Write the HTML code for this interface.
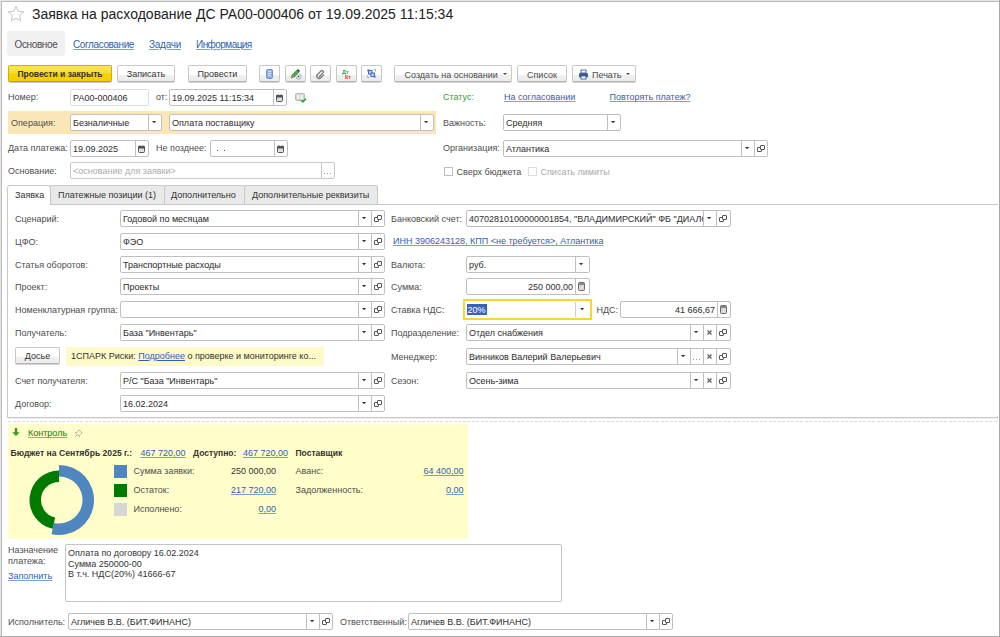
<!DOCTYPE html>
<html><head><meta charset="utf-8"><style>
html,body{margin:0;padding:0;width:1000px;height:637px;overflow:hidden;background:#fff;font-family:"Liberation Sans", sans-serif;}
.t{position:absolute;white-space:nowrap;line-height:12px;font-size:9px;-webkit-text-stroke:0px currentColor}
.ft{position:absolute;top:0.5px;white-space:nowrap;overflow:hidden;font-size:9px;-webkit-text-stroke:0.05px currentColor}
body{position:relative}
</style></head><body>
<div style="position:absolute;left:0px;top:0px;width:1000px;height:1px;box-sizing:border-box;background:#e4e4e6"></div>
<div style="position:absolute;left:0px;top:0px;width:1px;height:637px;box-sizing:border-box;background:#e4e4e6"></div>
<div style="position:absolute;left:1px;top:1px;width:999px;height:1px;box-sizing:border-box;background:#bcbcbc"></div>
<div style="position:absolute;left:1px;top:1px;width:1px;height:636px;box-sizing:border-box;background:#bcbcbc"></div>
<div style="position:absolute;left:999px;top:0px;width:1px;height:637px;box-sizing:border-box;background:#a9a9a9"></div>
<div style="position:absolute;left:0px;top:636px;width:1000px;height:1px;box-sizing:border-box;background:#a9a9a9"></div>
<svg width="18" height="18" style="position:absolute;left:7px;top:5px" viewBox="0 0 18 18"><path d="M9 1.2l2.3 5.1 5.5.5-4.2 3.7 1.3 5.4L9 13.1l-4.9 2.8 1.3-5.4L1.2 6.8l5.5-.5z" fill="none" stroke="#c4c4c4" stroke-width="1"/></svg>
<div class="t" style="left:32px;top:8.15px;font-size:14px;color:#222;font-weight:normal;">Заявка на расходование ДС РА00-000406 от 19.09.2025 11:15:34</div>
<div style="position:absolute;left:7px;top:31px;width:58px;height:25px;box-sizing:border-box;background:#f0f0f0;border-radius:4px"></div>
<div class="t" style="left:14.5px;top:38.53px;font-size:10px;color:#4d4d4d;font-weight:normal;letter-spacing:-0.37px;">Основное</div>
<div class="t" style="left:73px;top:38.53px;font-size:10px;color:#2f5fb3;font-weight:normal;text-decoration:underline;text-decoration-color:#2f5fb399;text-underline-offset:1px;letter-spacing:-0.39px;">Согласование</div>
<div class="t" style="left:149px;top:38.53px;font-size:10px;color:#2f5fb3;font-weight:normal;text-decoration:underline;text-decoration-color:#2f5fb399;text-underline-offset:1px;letter-spacing:-0.27px;">Задачи</div>
<div class="t" style="left:196px;top:38.53px;font-size:10px;color:#2f5fb3;font-weight:normal;text-decoration:underline;text-decoration-color:#2f5fb399;text-underline-offset:1px;letter-spacing:-0.55px;">Информация</div>
<div style="position:absolute;left:8px;top:65px;width:104px;height:17px;box-sizing:border-box;border:1px solid #d2b000;border-bottom-color:#c09f00;background:linear-gradient(#fbe651 0,#f8dd2c 48%,#f4d200 52%,#f3d000 100%);box-shadow:0 1px 0 rgba(0,0,0,0.2);border-radius:2px;"><div style="position:absolute;left:0;right:0;top:1px;line-height:15px;text-align:center;font-size:8.5px;font-weight:bold;color:#333;white-space:nowrap">Провести и закрыть</div></div>
<div style="position:absolute;left:117px;top:65px;width:58px;height:17px;box-sizing:border-box;border:1px solid #c8c8c8;border-bottom-color:#b2b2b2;background:linear-gradient(#fff 0,#fff 60%,#f0f0f0 60%,#ececec 100%);box-shadow:0 1px 0 rgba(0,0,0,0.16);border-radius:2px;"><div style="position:absolute;left:0;right:0;top:1px;line-height:15px;text-align:center;font-size:9px;font-weight:normal;color:#333;white-space:nowrap">Записать</div></div>
<div style="position:absolute;left:188px;top:65px;width:59px;height:17px;box-sizing:border-box;border:1px solid #c8c8c8;border-bottom-color:#b2b2b2;background:linear-gradient(#fff 0,#fff 60%,#f0f0f0 60%,#ececec 100%);box-shadow:0 1px 0 rgba(0,0,0,0.16);border-radius:2px;"><div style="position:absolute;left:0;right:0;top:1px;line-height:15px;text-align:center;font-size:9px;font-weight:normal;color:#333;white-space:nowrap">Провести</div></div>
<div style="position:absolute;left:259px;top:65px;width:21px;height:17px;box-sizing:border-box;border:1px solid #c8c8c8;border-bottom-color:#b2b2b2;background:linear-gradient(#fff 0,#fff 60%,#f0f0f0 60%,#ececec 100%);box-shadow:0 1px 0 rgba(0,0,0,0.16);border-radius:2px;"><div style="position:absolute;left:0;right:0;top:1px;line-height:15px;text-align:center;font-size:9px;font-weight:normal;color:#333;white-space:nowrap"></div><svg width="19" height="15" style="position:absolute;left:0;top:0"><rect x="6.5" y="3.5" width="6" height="9" rx="1.2" fill="#8fb1e0" stroke="#6f95cc"/><path d="M8 5.5h3M8 7.5h3M8 9.5h3" stroke="#d6e4f7"/></svg></div>
<div style="position:absolute;left:285px;top:65px;width:21px;height:17px;box-sizing:border-box;border:1px solid #c8c8c8;border-bottom-color:#b2b2b2;background:linear-gradient(#fff 0,#fff 60%,#f0f0f0 60%,#ececec 100%);box-shadow:0 1px 0 rgba(0,0,0,0.16);border-radius:2px;"><div style="position:absolute;left:0;right:0;top:1px;line-height:15px;text-align:center;font-size:9px;font-weight:normal;color:#333;white-space:nowrap"></div><svg width="19" height="15" style="position:absolute;left:0;top:0"><path d="M5 12l1-3 5-5 2 2-5 5z" fill="#3fae49" stroke="#2c7a33" stroke-width="0.6"/><path d="M5 12l1-3 2 2z" fill="#c88a4a"/><path d="M11 4l1-1 2 2-1 1z" fill="#333"/><circle cx="12.5" cy="10.5" r="2.6" fill="#fff" stroke="#7d8fb8" stroke-width="0.8"/><circle cx="12.5" cy="10.5" r="0.9" fill="#333"/></svg></div>
<div style="position:absolute;left:310px;top:65px;width:21px;height:17px;box-sizing:border-box;border:1px solid #c8c8c8;border-bottom-color:#b2b2b2;background:linear-gradient(#fff 0,#fff 60%,#f0f0f0 60%,#ececec 100%);box-shadow:0 1px 0 rgba(0,0,0,0.16);border-radius:2px;"><div style="position:absolute;left:0;right:0;top:1px;line-height:15px;text-align:center;font-size:9px;font-weight:normal;color:#333;white-space:nowrap"></div><svg width="19" height="15" style="position:absolute;left:0;top:0" fill="none" stroke="#7a7a7a" stroke-width="1.3"><path d="M8 11l4-4a1.4 1.4 0 0 0-2-2L6.5 8.5a2.3 2.3 0 0 0 3.3 3.3l3.2-3.2"/></svg></div>
<div style="position:absolute;left:336px;top:65px;width:21px;height:17px;box-sizing:border-box;border:1px solid #c8c8c8;border-bottom-color:#b2b2b2;background:linear-gradient(#fff 0,#fff 60%,#f0f0f0 60%,#ececec 100%);box-shadow:0 1px 0 rgba(0,0,0,0.16);border-radius:2px;"><div style="position:absolute;left:0;right:0;top:1px;line-height:15px;text-align:center;font-size:9px;font-weight:normal;color:#333;white-space:nowrap"></div><svg width="19" height="15" style="position:absolute;left:0;top:0"><text x="5" y="8" font-family="Liberation Sans" font-weight="bold" font-size="5.5" fill="#2f9e45">Дт</text><text x="8" y="13" font-family="Liberation Sans" font-weight="bold" font-size="5.5" fill="#e83a28">Кт</text></svg></div>
<div style="position:absolute;left:361px;top:65px;width:21px;height:17px;box-sizing:border-box;border:1px solid #c8c8c8;border-bottom-color:#b2b2b2;background:linear-gradient(#fff 0,#fff 60%,#f0f0f0 60%,#ececec 100%);box-shadow:0 1px 0 rgba(0,0,0,0.16);border-radius:2px;"><div style="position:absolute;left:0;right:0;top:1px;line-height:15px;text-align:center;font-size:9px;font-weight:normal;color:#333;white-space:nowrap"></div><svg width="19" height="15" style="position:absolute;left:0;top:0"><path d="M5.5 5.5v-2h2M11.5 3.5h2v2M13.5 9.5v2h-2M7.5 11.5h-2v-2" fill="none" stroke="#8fb0e0"/><rect x="6.5" y="4.5" width="3.5" height="3.5" fill="#b9d0f0" stroke="#3f6fb8"/><rect x="9" y="7" width="3.5" height="3.5" fill="#b9d0f0" stroke="#3f6fb8"/></svg></div>
<div style="position:absolute;left:394px;top:65px;width:118px;height:17px;box-sizing:border-box;border:1px solid #c8c8c8;border-bottom-color:#b2b2b2;background:linear-gradient(#fff 0,#fff 60%,#f0f0f0 60%,#ececec 100%);box-shadow:0 1px 0 rgba(0,0,0,0.16);border-radius:2px;"><div style="position:absolute;left:0;right:0;top:1px;line-height:15px;text-align:center;font-size:9px;font-weight:normal;color:#333;white-space:nowrap"></div><div class="t" style="left:9.5px;top:2.5px;color:#4d4d4d">Создать на основании</div><svg width="6" height="4" style="position:absolute;left:108px;top:7px"><path d="M0 0h4l-2 2z" fill="#444"/></svg></div>
<div style="position:absolute;left:517px;top:65px;width:50px;height:17px;box-sizing:border-box;border:1px solid #c8c8c8;border-bottom-color:#b2b2b2;background:linear-gradient(#fff 0,#fff 60%,#f0f0f0 60%,#ececec 100%);box-shadow:0 1px 0 rgba(0,0,0,0.16);border-radius:2px;"><div style="position:absolute;left:0;right:0;top:1px;line-height:15px;text-align:center;font-size:9px;font-weight:normal;color:#333;white-space:nowrap"></div><div class="t" style="left:9px;top:2.5px;color:#4d4d4d">Список</div></div>
<div style="position:absolute;left:572px;top:65px;width:64px;height:17px;box-sizing:border-box;border:1px solid #c8c8c8;border-bottom-color:#b2b2b2;background:linear-gradient(#fff 0,#fff 60%,#f0f0f0 60%,#ececec 100%);box-shadow:0 1px 0 rgba(0,0,0,0.16);border-radius:2px;"><div style="position:absolute;left:0;right:0;top:1px;line-height:15px;text-align:center;font-size:9px;font-weight:normal;color:#333;white-space:nowrap"></div><svg width="12" height="12" style="position:absolute;left:5px;top:3px"><rect x="3" y="1" width="5" height="3" fill="#fff" stroke="#3d5f94" stroke-width="0.9"/><rect x="1" y="4" width="9" height="4.5" rx="1.2" fill="#3d5f94"/><rect x="3" y="7" width="5" height="3" fill="#fff" stroke="#3d5f94" stroke-width="0.9"/></svg><div class="t" style="left:19px;top:2.5px;color:#4d4d4d">Печать</div><svg width="6" height="4" style="position:absolute;left:53px;top:7px"><path d="M0 0h4l-2 2z" fill="#444"/></svg></div>
<div class="t" style="left:8px;top:91.38px;font-size:9px;color:#4d4d4d;font-weight:normal;">Номер:</div>
<div style="position:absolute;left:70px;top:89px;width:79px;height:17px;box-sizing:border-box;border:1px solid #dcdcdc;border-radius:2px;background:#fff;"><div class="ft" style="left:2px;width:75px;height:15px;line-height:15px;color:#333333">РА00-000406</div></div>
<div class="t" style="left:156px;top:91.38px;font-size:9px;color:#4d4d4d;font-weight:normal;">от:</div>
<div style="position:absolute;left:169px;top:89px;width:118px;height:17px;box-sizing:border-box;border:1px solid #c0c0c0;border-radius:2px;background:#fff;"><div style="position:absolute;right:0px;top:0;width:13px;height:15px;box-sizing:border-box;border-left:1px solid #c0c0c0;"><svg width="12" height="15" style="position:absolute;left:0;top:0"><rect x="2.5" y="5.5" width="6" height="6" rx="1" fill="#dedede" stroke="#555"/><rect x="2" y="5" width="7" height="2.5" rx="1" fill="#505050"/><rect x="3.5" y="4" width="1" height="1" fill="#888"/><rect x="6.5" y="4" width="1" height="1" fill="#888"/></svg></div><div class="ft" style="left:2px;width:101px;height:15px;line-height:15px;color:#333333">19.09.2025 11:15:34</div></div>
<svg width="12" height="11" style="position:absolute;left:295px;top:93px"><rect x="0.5" y="0.5" width="9" height="7" rx="1" fill="#d4d4d4" stroke="#b8b8b8"/><rect x="2" y="2" width="2" height="4" fill="#f4f4f4"/><rect x="5.5" y="2" width="2" height="4" fill="#f4f4f4"/><path d="M6.3 7.3l1.6 1.6 3-3.2" fill="none" stroke="#22aa22" stroke-width="1.6"/></svg>
<div class="t" style="left:443px;top:91.38px;font-size:9px;color:#2f9f2f;font-weight:normal;">Статус:</div>
<div class="t" style="left:504px;top:91.38px;font-size:9px;color:#2f5fb3;font-weight:normal;text-decoration:underline;text-decoration-color:#2f5fb399;text-underline-offset:1px;">На согласовании</div>
<div class="t" style="left:609.5px;top:91.38px;font-size:9px;color:#2f5fb3;font-weight:normal;text-decoration:underline;text-decoration-color:#2f5fb399;text-underline-offset:1px;">Повторять платеж?</div>
<div style="position:absolute;left:8px;top:111px;width:428px;height:23px;box-sizing:border-box;background:#fbe7b6"></div>
<div class="t" style="left:11px;top:116.88px;font-size:9px;color:#4d4d4d;font-weight:normal;">Операция:</div>
<div style="position:absolute;left:70px;top:114px;width:92px;height:17px;box-sizing:border-box;border:1px solid #c0c0c0;border-radius:2px;background:#fff;"><div style="position:absolute;right:0px;top:0;width:13px;height:15px;box-sizing:border-box;border-left:1px solid #c0c0c0;"><svg width="12" height="15" style="position:absolute;left:0;top:0"><path d="M3 6h4.2l-2.1 2.2z" fill="#333"/></svg></div><div class="ft" style="left:2px;width:75px;height:15px;line-height:15px;color:#333333">Безналичные</div></div>
<div style="position:absolute;left:169px;top:114px;width:265px;height:17px;box-sizing:border-box;border:1px solid #c0c0c0;border-radius:2px;background:#fff;"><div style="position:absolute;right:0px;top:0;width:13px;height:15px;box-sizing:border-box;border-left:1px solid #c0c0c0;"><svg width="12" height="15" style="position:absolute;left:0;top:0"><path d="M3 6h4.2l-2.1 2.2z" fill="#333"/></svg></div><div class="ft" style="left:2px;width:248px;height:15px;line-height:15px;color:#333333">Оплата поставщику</div></div>
<div class="t" style="left:443px;top:116.88px;font-size:9px;color:#4d4d4d;font-weight:normal;">Важность:</div>
<div style="position:absolute;left:503px;top:114px;width:118px;height:17px;box-sizing:border-box;border:1px solid #c0c0c0;border-radius:2px;background:#fff;"><div style="position:absolute;right:0px;top:0;width:13px;height:15px;box-sizing:border-box;border-left:1px solid #c0c0c0;"><svg width="12" height="15" style="position:absolute;left:0;top:0"><path d="M3 6h4.2l-2.1 2.2z" fill="#333"/></svg></div><div class="ft" style="left:2px;width:101px;height:15px;line-height:15px;color:#333333">Средняя</div></div>
<div class="t" style="left:8px;top:142.38px;font-size:9px;color:#4d4d4d;font-weight:normal;">Дата платежа:</div>
<div style="position:absolute;left:70px;top:140px;width:79px;height:17px;box-sizing:border-box;border:1px solid #c0c0c0;border-radius:2px;background:#fff;"><div style="position:absolute;right:0px;top:0;width:13px;height:15px;box-sizing:border-box;border-left:1px solid #c0c0c0;"><svg width="12" height="15" style="position:absolute;left:0;top:0"><rect x="2.5" y="5.5" width="6" height="6" rx="1" fill="#dedede" stroke="#555"/><rect x="2" y="5" width="7" height="2.5" rx="1" fill="#505050"/><rect x="3.5" y="4" width="1" height="1" fill="#888"/><rect x="6.5" y="4" width="1" height="1" fill="#888"/></svg></div><div class="ft" style="left:2px;width:62px;height:15px;line-height:15px;color:#333333">19.09.2025</div></div>
<div class="t" style="left:156px;top:142.38px;font-size:9px;color:#4d4d4d;font-weight:normal;">Не позднее:</div>
<div style="position:absolute;left:210px;top:140px;width:78px;height:17px;box-sizing:border-box;border:1px solid #c0c0c0;border-radius:2px;background:#fff;"><div style="position:absolute;right:0px;top:0;width:13px;height:15px;box-sizing:border-box;border-left:1px solid #c0c0c0;"><svg width="12" height="15" style="position:absolute;left:0;top:0"><rect x="2.5" y="5.5" width="6" height="6" rx="1" fill="#dedede" stroke="#555"/><rect x="2" y="5" width="7" height="2.5" rx="1" fill="#505050"/><rect x="3.5" y="4" width="1" height="1" fill="#888"/><rect x="6.5" y="4" width="1" height="1" fill="#888"/></svg></div></div>
<div style="position:absolute;left:217px;top:150px;width:1px;height:1px;box-sizing:border-box;background:#555"></div>
<div style="position:absolute;left:224px;top:150px;width:1px;height:1px;box-sizing:border-box;background:#555"></div>
<div class="t" style="left:443px;top:142.38px;font-size:9px;color:#4d4d4d;font-weight:normal;">Организация:</div>
<div style="position:absolute;left:503px;top:140px;width:265px;height:17px;box-sizing:border-box;border:1px solid #c0c0c0;border-radius:2px;background:#fff;"><div style="position:absolute;right:13px;top:0;width:13px;height:15px;box-sizing:border-box;border-left:1px solid #c0c0c0;"><svg width="12" height="15" style="position:absolute;left:0;top:0"><path d="M3 6h4.2l-2.1 2.2z" fill="#333"/></svg></div><div style="position:absolute;right:0px;top:0;width:13px;height:15px;box-sizing:border-box;border-left:1px solid #c0c0c0;"><svg width="12" height="15" style="position:absolute;left:0;top:0" stroke="#555" stroke-width="1"><rect x="2.5" y="6.5" width="4" height="4" rx="0.4" fill="none"/><rect x="5.5" y="4.5" width="4" height="4" rx="0.4" fill="#fff"/></svg></div><div class="ft" style="left:2px;width:235px;height:15px;line-height:15px;color:#333333">Атлантика</div></div>
<div class="t" style="left:8px;top:164.88px;font-size:9px;color:#4d4d4d;font-weight:normal;">Основание:</div>
<div style="position:absolute;left:70px;top:162px;width:265px;height:17px;box-sizing:border-box;border:1px solid #c8c8c8;border-radius:2px;background:#fff;"><div style="position:absolute;right:0px;top:0;width:13px;height:15px;box-sizing:border-box;border-left:1px solid #c8c8c8;"><svg width="12" height="15" style="position:absolute;left:0;top:0" fill="#999"><rect x="2" y="10" width="1" height="1"/><rect x="5" y="10" width="1" height="1"/><rect x="8" y="10" width="1" height="1"/></svg></div><div class="ft" style="left:2px;width:248px;height:15px;line-height:15px;color:#b0b0b0">&lt;основание для заявки&gt;</div></div>
<div style="position:absolute;left:444px;top:167px;width:9px;height:9px;box-sizing:border-box;border:1px solid #bdbdbd;background:#fff"></div>
<div class="t" style="left:456.5px;top:165.88px;font-size:9px;color:#4d4d4d;font-weight:normal;">Сверх бюджета</div>
<div style="position:absolute;left:528px;top:167px;width:9px;height:9px;box-sizing:border-box;border:1px solid #dcdcdc;background:#fff"></div>
<div class="t" style="left:540.5px;top:165.88px;font-size:9px;color:#a8a8a8;font-weight:normal;">Списать лимиты</div>
<div style="position:absolute;left:7px;top:204px;width:991px;height:214px;box-sizing:border-box;border:1px solid #c8c8c8;border-right:none;background:#fff"></div>
<div style="position:absolute;left:8px;top:418px;width:990px;height:1px;box-sizing:border-box;background:#eeeeee"></div>
<div style="position:absolute;left:997px;top:416px;width:1px;height:2px;box-sizing:border-box;background:#c8c8c8"></div>
<div style="position:absolute;left:50px;top:185px;width:115px;height:20px;box-sizing:border-box;border:1px solid #c8c8c8;background:#e9e9e9;border-radius:2px 2px 0 0"></div>
<div style="position:absolute;left:164px;top:185px;width:81px;height:20px;box-sizing:border-box;border:1px solid #c8c8c8;background:#e9e9e9;border-radius:2px 2px 0 0"></div>
<div style="position:absolute;left:244px;top:185px;width:134px;height:20px;box-sizing:border-box;border:1px solid #c8c8c8;background:#e9e9e9;border-radius:2px 2px 0 0"></div>
<div style="position:absolute;left:7px;top:185px;width:44px;height:20px;box-sizing:border-box;border:1px solid #c8c8c8;border-bottom:none;background:#fff;border-radius:3px 3px 0 0"></div>
<div style="position:absolute;left:8px;top:204px;width:42px;height:1px;box-sizing:border-box;background:#fff"></div>
<div class="t" style="left:15px;top:189.38px;font-size:9px;color:#333;font-weight:normal;">Заявка</div>
<div class="t" style="left:58px;top:189.38px;font-size:9px;color:#333;font-weight:normal;">Платежные позиции (1)</div>
<div class="t" style="left:171px;top:189.38px;font-size:9px;color:#333;font-weight:normal;">Дополнительно</div>
<div class="t" style="left:252px;top:189.38px;font-size:9px;color:#333;font-weight:normal;">Дополнительные реквизиты</div>
<div class="t" style="left:15px;top:212.88px;font-size:9px;color:#4d4d4d;font-weight:normal;">Сценарий:</div>
<div style="position:absolute;left:120px;top:210px;width:265px;height:17px;box-sizing:border-box;border:1px solid #c0c0c0;border-radius:2px;background:#fff;"><div style="position:absolute;right:13px;top:0;width:13px;height:15px;box-sizing:border-box;border-left:1px solid #c0c0c0;"><svg width="12" height="15" style="position:absolute;left:0;top:0"><path d="M3 6h4.2l-2.1 2.2z" fill="#333"/></svg></div><div style="position:absolute;right:0px;top:0;width:13px;height:15px;box-sizing:border-box;border-left:1px solid #c0c0c0;"><svg width="12" height="15" style="position:absolute;left:0;top:0" stroke="#555" stroke-width="1"><rect x="2.5" y="6.5" width="4" height="4" rx="0.4" fill="none"/><rect x="5.5" y="4.5" width="4" height="4" rx="0.4" fill="#fff"/></svg></div><div class="ft" style="left:2px;width:235px;height:15px;line-height:15px;color:#333333">Годовой по месяцам</div></div>
<div class="t" style="left:15px;top:235.88px;font-size:9px;color:#4d4d4d;font-weight:normal;">ЦФО:</div>
<div style="position:absolute;left:120px;top:233px;width:265px;height:17px;box-sizing:border-box;border:1px solid #c0c0c0;border-radius:2px;background:#fff;"><div style="position:absolute;right:13px;top:0;width:13px;height:15px;box-sizing:border-box;border-left:1px solid #c0c0c0;"><svg width="12" height="15" style="position:absolute;left:0;top:0"><path d="M3 6h4.2l-2.1 2.2z" fill="#333"/></svg></div><div style="position:absolute;right:0px;top:0;width:13px;height:15px;box-sizing:border-box;border-left:1px solid #c0c0c0;"><svg width="12" height="15" style="position:absolute;left:0;top:0" stroke="#555" stroke-width="1"><rect x="2.5" y="6.5" width="4" height="4" rx="0.4" fill="none"/><rect x="5.5" y="4.5" width="4" height="4" rx="0.4" fill="#fff"/></svg></div><div class="ft" style="left:2px;width:235px;height:15px;line-height:15px;color:#333333">ФЭО</div></div>
<div class="t" style="left:15px;top:258.88px;font-size:9px;color:#4d4d4d;font-weight:normal;">Статья оборотов:</div>
<div style="position:absolute;left:120px;top:256px;width:265px;height:17px;box-sizing:border-box;border:1px solid #c0c0c0;border-radius:2px;background:#fff;"><div style="position:absolute;right:13px;top:0;width:13px;height:15px;box-sizing:border-box;border-left:1px solid #c0c0c0;"><svg width="12" height="15" style="position:absolute;left:0;top:0"><path d="M3 6h4.2l-2.1 2.2z" fill="#333"/></svg></div><div style="position:absolute;right:0px;top:0;width:13px;height:15px;box-sizing:border-box;border-left:1px solid #c0c0c0;"><svg width="12" height="15" style="position:absolute;left:0;top:0" stroke="#555" stroke-width="1"><rect x="2.5" y="6.5" width="4" height="4" rx="0.4" fill="none"/><rect x="5.5" y="4.5" width="4" height="4" rx="0.4" fill="#fff"/></svg></div><div class="ft" style="left:2px;width:235px;height:15px;line-height:15px;color:#333333">Транспортные расходы</div></div>
<div class="t" style="left:15px;top:280.88px;font-size:9px;color:#4d4d4d;font-weight:normal;">Проект:</div>
<div style="position:absolute;left:120px;top:278px;width:265px;height:17px;box-sizing:border-box;border:1px solid #c0c0c0;border-radius:2px;background:#fff;"><div style="position:absolute;right:13px;top:0;width:13px;height:15px;box-sizing:border-box;border-left:1px solid #c0c0c0;"><svg width="12" height="15" style="position:absolute;left:0;top:0"><path d="M3 6h4.2l-2.1 2.2z" fill="#333"/></svg></div><div style="position:absolute;right:0px;top:0;width:13px;height:15px;box-sizing:border-box;border-left:1px solid #c0c0c0;"><svg width="12" height="15" style="position:absolute;left:0;top:0" stroke="#555" stroke-width="1"><rect x="2.5" y="6.5" width="4" height="4" rx="0.4" fill="none"/><rect x="5.5" y="4.5" width="4" height="4" rx="0.4" fill="#fff"/></svg></div><div class="ft" style="left:2px;width:235px;height:15px;line-height:15px;color:#333333">Проекты</div></div>
<div class="t" style="left:15px;top:303.88px;font-size:9px;color:#4d4d4d;font-weight:normal;">Номенклатурная группа:</div>
<div style="position:absolute;left:120px;top:301px;width:265px;height:17px;box-sizing:border-box;border:1px solid #c0c0c0;border-radius:2px;background:#fff;"><div style="position:absolute;right:13px;top:0;width:13px;height:15px;box-sizing:border-box;border-left:1px solid #c0c0c0;"><svg width="12" height="15" style="position:absolute;left:0;top:0"><path d="M3 6h4.2l-2.1 2.2z" fill="#333"/></svg></div><div style="position:absolute;right:0px;top:0;width:13px;height:15px;box-sizing:border-box;border-left:1px solid #c0c0c0;"><svg width="12" height="15" style="position:absolute;left:0;top:0" stroke="#555" stroke-width="1"><rect x="2.5" y="6.5" width="4" height="4" rx="0.4" fill="none"/><rect x="5.5" y="4.5" width="4" height="4" rx="0.4" fill="#fff"/></svg></div></div>
<div class="t" style="left:15px;top:326.88px;font-size:9px;color:#4d4d4d;font-weight:normal;">Получатель:</div>
<div style="position:absolute;left:120px;top:324px;width:265px;height:17px;box-sizing:border-box;border:1px solid #c0c0c0;border-radius:2px;background:#fff;"><div style="position:absolute;right:13px;top:0;width:13px;height:15px;box-sizing:border-box;border-left:1px solid #c0c0c0;"><svg width="12" height="15" style="position:absolute;left:0;top:0"><path d="M3 6h4.2l-2.1 2.2z" fill="#333"/></svg></div><div style="position:absolute;right:0px;top:0;width:13px;height:15px;box-sizing:border-box;border-left:1px solid #c0c0c0;"><svg width="12" height="15" style="position:absolute;left:0;top:0" stroke="#555" stroke-width="1"><rect x="2.5" y="6.5" width="4" height="4" rx="0.4" fill="none"/><rect x="5.5" y="4.5" width="4" height="4" rx="0.4" fill="#fff"/></svg></div><div class="ft" style="left:2px;width:235px;height:15px;line-height:15px;color:#333333">База "Инвентарь"</div></div>
<div class="t" style="left:15px;top:374.88px;font-size:9px;color:#4d4d4d;font-weight:normal;">Счет получателя:</div>
<div style="position:absolute;left:120px;top:372px;width:265px;height:17px;box-sizing:border-box;border:1px solid #c0c0c0;border-radius:2px;background:#fff;"><div style="position:absolute;right:13px;top:0;width:13px;height:15px;box-sizing:border-box;border-left:1px solid #c0c0c0;"><svg width="12" height="15" style="position:absolute;left:0;top:0"><path d="M3 6h4.2l-2.1 2.2z" fill="#333"/></svg></div><div style="position:absolute;right:0px;top:0;width:13px;height:15px;box-sizing:border-box;border-left:1px solid #c0c0c0;"><svg width="12" height="15" style="position:absolute;left:0;top:0" stroke="#555" stroke-width="1"><rect x="2.5" y="6.5" width="4" height="4" rx="0.4" fill="none"/><rect x="5.5" y="4.5" width="4" height="4" rx="0.4" fill="#fff"/></svg></div><div class="ft" style="left:2px;width:235px;height:15px;line-height:15px;color:#333333">Р/С "База "Инвентарь"</div></div>
<div class="t" style="left:15px;top:397.88px;font-size:9px;color:#4d4d4d;font-weight:normal;">Договор:</div>
<div style="position:absolute;left:120px;top:395px;width:265px;height:17px;box-sizing:border-box;border:1px solid #c0c0c0;border-radius:2px;background:#fff;"><div style="position:absolute;right:13px;top:0;width:13px;height:15px;box-sizing:border-box;border-left:1px solid #c0c0c0;"><svg width="12" height="15" style="position:absolute;left:0;top:0"><path d="M3 6h4.2l-2.1 2.2z" fill="#333"/></svg></div><div style="position:absolute;right:0px;top:0;width:13px;height:15px;box-sizing:border-box;border-left:1px solid #c0c0c0;"><svg width="12" height="15" style="position:absolute;left:0;top:0" stroke="#555" stroke-width="1"><rect x="2.5" y="6.5" width="4" height="4" rx="0.4" fill="none"/><rect x="5.5" y="4.5" width="4" height="4" rx="0.4" fill="#fff"/></svg></div><div class="ft" style="left:2px;width:235px;height:15px;line-height:15px;color:#333333">16.02.2024</div></div>
<div style="position:absolute;left:15px;top:347px;width:45px;height:17px;box-sizing:border-box;border:1px solid #c8c8c8;border-bottom-color:#b2b2b2;background:linear-gradient(#fff 0,#fff 60%,#f0f0f0 60%,#ececec 100%);box-shadow:0 1px 0 rgba(0,0,0,0.16);border-radius:2px;"><div style="position:absolute;left:0;right:0;top:1px;line-height:15px;text-align:center;font-size:9px;font-weight:normal;color:#333;white-space:nowrap">Досье</div></div>
<div style="position:absolute;left:66px;top:347px;width:258px;height:19px;box-sizing:border-box;background:#fdf9c8"></div>
<div style="position:absolute;left:71px;top:350px;line-height:12px;font-size:9px;color:#333;white-space:nowrap">1СПАРК Риски: <span style="color:#2f5fb3;text-decoration:underline">Подробнее</span> о проверке и мониторинге ко...</div>
<div class="t" style="left:391px;top:212.88px;font-size:9px;color:#4d4d4d;font-weight:normal;">Банковский счет:</div>
<div style="position:absolute;left:466px;top:210px;width:265px;height:17px;box-sizing:border-box;border:1px solid #c0c0c0;border-radius:2px;background:#fff;"><div style="position:absolute;right:14px;top:0;width:13px;height:15px;box-sizing:border-box;border-left:1px solid #c0c0c0;"><svg width="12" height="15" style="position:absolute;left:0;top:0"><path d="M3 6h4.2l-2.1 2.2z" fill="#333"/></svg></div><div style="position:absolute;right:0px;top:0;width:14px;height:15px;box-sizing:border-box;border-left:1px solid #c0c0c0;"><svg width="12" height="15" style="position:absolute;left:0;top:0" stroke="#555" stroke-width="1"><rect x="2.5" y="6.5" width="4" height="4" rx="0.4" fill="none"/><rect x="5.5" y="4.5" width="4" height="4" rx="0.4" fill="#fff"/></svg></div><div class="ft" style="left:2px;width:234px;height:15px;line-height:15px;color:#333333">40702810100000001854, "ВЛАДИМИРСКИЙ" ФБ "ДИАЛОГ</div></div>
<div class="t" style="left:393px;top:235.38px;font-size:9px;color:#2f5fb3;font-weight:normal;text-decoration:underline;text-decoration-color:#2f5fb399;text-underline-offset:1px;">ИНН 3906243128, КПП &lt;не требуется&gt;, Атлантика</div>
<div class="t" style="left:391px;top:258.88px;font-size:9px;color:#4d4d4d;font-weight:normal;">Валюта:</div>
<div style="position:absolute;left:466px;top:256px;width:124px;height:17px;box-sizing:border-box;border:1px solid #c0c0c0;border-radius:2px;background:#fff;"><div style="position:absolute;right:0px;top:0;width:14px;height:15px;box-sizing:border-box;border-left:1px solid #c0c0c0;"><svg width="12" height="15" style="position:absolute;left:0;top:0"><path d="M3 6h4.2l-2.1 2.2z" fill="#333"/></svg></div><div class="ft" style="left:2px;width:106px;height:15px;line-height:15px;color:#333333">руб.</div></div>
<div class="t" style="left:391px;top:281.38px;font-size:9px;color:#4d4d4d;font-weight:normal;">Сумма:</div>
<div style="position:absolute;left:466px;top:278px;width:124px;height:17px;box-sizing:border-box;border:1px solid #c0c0c0;border-radius:2px;background:#fff;"><div style="position:absolute;right:0px;top:0;width:14px;height:15px;box-sizing:border-box;border-left:1px solid #c0c0c0;"><svg width="12" height="15" style="position:absolute;left:0;top:0"><rect x="2.5" y="3.5" width="6" height="8" rx="1" fill="#d6d6d6" stroke="#6a6a6a"/><rect x="3" y="4" width="5" height="2" fill="#8a8a8a"/><path d="M4.5 10l2.5-2.5" stroke="#f4f4f4"/></svg></div><div class="ft" style="left:0;width:106px;height:15px;line-height:15px;text-align:right;color:#333333">250 000,00</div></div>
<div class="t" style="left:391px;top:303.88px;font-size:9px;color:#4d4d4d;font-weight:normal;">Ставка НДС:</div>
<div style="position:absolute;left:463px;top:299px;width:129px;height:21px;box-sizing:border-box;border:2px solid #f8d434;background:#fff"></div>
<div style="position:absolute;left:575px;top:302px;width:1px;height:15px;background:#cfcfcf"></div>
<div style="position:absolute;left:577px;top:301px;width:15px;height:17px"><svg width="12" height="15" style="position:absolute;left:0;top:1px"><path d="M3 6h4.2l-2.1 2.2z" fill="#333"/></svg></div>
<div style="position:absolute;left:467px;top:304px;width:20px;height:11px;background:#3a63b8"></div>
<div class="t" style="left:467.5px;top:303.88px;font-size:9px;color:#fff;font-weight:normal;">20%</div>
<div class="t" style="left:596.5px;top:303.88px;font-size:9px;color:#4d4d4d;font-weight:normal;">НДС:</div>
<div style="position:absolute;left:620px;top:301px;width:111px;height:17px;box-sizing:border-box;border:1px solid #c0c0c0;border-radius:2px;background:#fff;"><div style="position:absolute;right:0px;top:0;width:13px;height:15px;box-sizing:border-box;border-left:1px solid #c0c0c0;"><svg width="12" height="15" style="position:absolute;left:0;top:0"><rect x="2.5" y="3.5" width="6" height="8" rx="1" fill="#d6d6d6" stroke="#6a6a6a"/><rect x="3" y="4" width="5" height="2" fill="#8a8a8a"/><path d="M4.5 10l2.5-2.5" stroke="#f4f4f4"/></svg></div><div class="ft" style="left:0;width:94px;height:15px;line-height:15px;text-align:right;color:#333333">41 666,67</div></div>
<div class="t" style="left:391px;top:326.88px;font-size:9px;color:#4d4d4d;font-weight:normal;">Подразделение:</div>
<div style="position:absolute;left:466px;top:324px;width:265px;height:17px;box-sizing:border-box;border:1px solid #c0c0c0;border-radius:2px;background:#fff;"><div style="position:absolute;right:27px;top:0;width:13px;height:15px;box-sizing:border-box;border-left:1px solid #c0c0c0;"><svg width="12" height="15" style="position:absolute;left:0;top:0"><path d="M3 6h4.2l-2.1 2.2z" fill="#333"/></svg></div><div style="position:absolute;right:14px;top:0;width:13px;height:15px;box-sizing:border-box;border-left:1px solid #c0c0c0;"><svg width="12" height="15" style="position:absolute;left:0;top:0" fill="none" stroke="#585858" stroke-width="1.1"><path d="M3.5 5.5l4 4M7.5 5.5l-4 4"/></svg></div><div style="position:absolute;right:0px;top:0;width:14px;height:15px;box-sizing:border-box;border-left:1px solid #c0c0c0;"><svg width="12" height="15" style="position:absolute;left:0;top:0" stroke="#555" stroke-width="1"><rect x="2.5" y="6.5" width="4" height="4" rx="0.4" fill="none"/><rect x="5.5" y="4.5" width="4" height="4" rx="0.4" fill="#fff"/></svg></div><div class="ft" style="left:2px;width:221px;height:15px;line-height:15px;color:#333333">Отдел снабжения</div></div>
<div class="t" style="left:391px;top:351.38px;font-size:9px;color:#4d4d4d;font-weight:normal;">Менеджер:</div>
<div style="position:absolute;left:466px;top:348px;width:265px;height:17px;box-sizing:border-box;border:1px solid #c0c0c0;border-radius:2px;background:#fff;"><div style="position:absolute;right:40px;top:0;width:13px;height:15px;box-sizing:border-box;border-left:1px solid #c0c0c0;"><svg width="12" height="15" style="position:absolute;left:0;top:0"><path d="M3 6h4.2l-2.1 2.2z" fill="#333"/></svg></div><div style="position:absolute;right:27px;top:0;width:13px;height:15px;box-sizing:border-box;border-left:1px solid #c0c0c0;"><svg width="12" height="15" style="position:absolute;left:0;top:0" fill="#999"><rect x="2" y="10" width="1" height="1"/><rect x="5" y="10" width="1" height="1"/><rect x="8" y="10" width="1" height="1"/></svg></div><div style="position:absolute;right:14px;top:0;width:13px;height:15px;box-sizing:border-box;border-left:1px solid #c0c0c0;"><svg width="12" height="15" style="position:absolute;left:0;top:0" fill="none" stroke="#585858" stroke-width="1.1"><path d="M3.5 5.5l4 4M7.5 5.5l-4 4"/></svg></div><div style="position:absolute;right:0px;top:0;width:14px;height:15px;box-sizing:border-box;border-left:1px solid #c0c0c0;"><svg width="12" height="15" style="position:absolute;left:0;top:0" stroke="#555" stroke-width="1"><rect x="2.5" y="6.5" width="4" height="4" rx="0.4" fill="none"/><rect x="5.5" y="4.5" width="4" height="4" rx="0.4" fill="#fff"/></svg></div><div class="ft" style="left:2px;width:208px;height:15px;line-height:15px;color:#333333">Винников Валерий Валерьевич</div></div>
<div class="t" style="left:391px;top:375.38px;font-size:9px;color:#4d4d4d;font-weight:normal;">Сезон:</div>
<div style="position:absolute;left:466px;top:372px;width:265px;height:17px;box-sizing:border-box;border:1px solid #c0c0c0;border-radius:2px;background:#fff;"><div style="position:absolute;right:27px;top:0;width:13px;height:15px;box-sizing:border-box;border-left:1px solid #c0c0c0;"><svg width="12" height="15" style="position:absolute;left:0;top:0"><path d="M3 6h4.2l-2.1 2.2z" fill="#333"/></svg></div><div style="position:absolute;right:14px;top:0;width:13px;height:15px;box-sizing:border-box;border-left:1px solid #c0c0c0;"><svg width="12" height="15" style="position:absolute;left:0;top:0" fill="none" stroke="#585858" stroke-width="1.1"><path d="M3.5 5.5l4 4M7.5 5.5l-4 4"/></svg></div><div style="position:absolute;right:0px;top:0;width:14px;height:15px;box-sizing:border-box;border-left:1px solid #c0c0c0;"><svg width="12" height="15" style="position:absolute;left:0;top:0" stroke="#555" stroke-width="1"><rect x="2.5" y="6.5" width="4" height="4" rx="0.4" fill="none"/><rect x="5.5" y="4.5" width="4" height="4" rx="0.4" fill="#fff"/></svg></div><div class="ft" style="left:2px;width:221px;height:15px;line-height:15px;color:#333333">Осень-зима</div></div>
<div style="position:absolute;left:8px;top:421px;width:990px;height:1px;box-sizing:border-box;background:repeating-linear-gradient(90deg,#dcdcdc 0 3px,transparent 3px 5px,#dcdcdc 5px 8px,transparent 8px 9px)"></div>
<div style="position:absolute;left:8px;top:424px;width:460px;height:115px;box-sizing:border-box;background:#fffecb"></div>
<svg width="8" height="9" style="position:absolute;left:12px;top:428px"><path d="M2.8 0h2.4v4.2h2.6L4 8 .2 4.2h2.6z" fill="#3c9a1e"/></svg>
<div class="t" style="left:28px;top:427.38px;font-size:9px;color:#2f8a1c;font-weight:normal;text-decoration:underline;text-decoration-color:#2f8a1c99;text-underline-offset:1px;-webkit-text-stroke:0.12px currentColor;">Контроль</div>
<svg width="9" height="9" style="position:absolute;left:74px;top:429px" fill="none" stroke="#a0a0a0" stroke-width="0.8"><path d="M5 0.8l3.2 3.2-1.2.6-1.7 1.7.2 1.5-4.3-4.3 1.5.2 1.7-1.7z"/><path d="M0.8 8.2l2.2-2.2"/></svg>
<div class="t" style="left:10.5px;top:446.52px;font-size:8.6px;color:#333;font-weight:bold;">Бюджет на Сентябрь 2025 г.:</div>
<div class="t" style="left:140.5px;top:446.88px;font-size:9px;color:#2f5fb3;font-weight:normal;text-decoration:underline;text-decoration-color:#2f5fb399;text-underline-offset:1px;">467 720,00</div>
<div class="t" style="left:193px;top:446.55px;font-size:8.5px;color:#333;font-weight:bold;">Доступно:</div>
<div class="t" style="left:243px;top:446.88px;font-size:9px;color:#2f5fb3;font-weight:normal;text-decoration:underline;text-decoration-color:#2f5fb399;text-underline-offset:1px;">467 720,00</div>
<div class="t" style="left:295.5px;top:446.55px;font-size:8.5px;color:#333;font-weight:bold;">Поставщик</div>
<svg width="1000" height="637" style="position:absolute;left:0;top:0"><path d="M59.00 465.00A35 35 0 1 1 51.48 534.18L53.95 522.95A23.5 23.5 0 1 0 59.00 476.50Z" fill="#4f86bf"/><path d="M52.67 528.81A29.5 29.5 0 0 1 59.00 470.50L59.00 482.00A18 18 0 0 0 55.13 517.58Z" fill="#007a00"/></svg>
<div style="position:absolute;left:114px;top:465px;width:13px;height:13px;box-sizing:border-box;background:#4f86bf"></div>
<div style="position:absolute;left:114px;top:484px;width:13px;height:13px;box-sizing:border-box;background:#007a00"></div>
<div style="position:absolute;left:114px;top:503px;width:13px;height:13px;box-sizing:border-box;background:#d6d6d6"></div>
<div class="t" style="left:133.5px;top:464.88px;font-size:9px;color:#4d4d4d;font-weight:normal;">Сумма заявки:</div>
<div class="t" style="left:133.5px;top:483.88px;font-size:9px;color:#4d4d4d;font-weight:normal;">Остаток:</div>
<div class="t" style="left:133.5px;top:502.88px;font-size:9px;color:#4d4d4d;font-weight:normal;">Исполнено:</div>
<div class="t" style="right:724px;top:464.88px;font-size:9px;color:#333;font-weight:normal;">250 000,00</div>
<div class="t" style="right:724px;top:483.88px;font-size:9px;color:#2f5fb3;font-weight:normal;text-decoration:underline;text-decoration-color:#2f5fb399;text-underline-offset:1px;">217 720,00</div>
<div class="t" style="right:724px;top:502.88px;font-size:9px;color:#2f5fb3;font-weight:normal;text-decoration:underline;text-decoration-color:#2f5fb399;text-underline-offset:1px;">0,00</div>
<div class="t" style="left:295.5px;top:464.88px;font-size:9px;color:#4d4d4d;font-weight:normal;">Аванс:</div>
<div class="t" style="left:295.5px;top:483.88px;font-size:9px;color:#4d4d4d;font-weight:normal;">Задолженность:</div>
<div class="t" style="right:536.5px;top:464.88px;font-size:9px;color:#2f5fb3;font-weight:normal;text-decoration:underline;text-decoration-color:#2f5fb399;text-underline-offset:1px;">64 400,00</div>
<div class="t" style="right:536.5px;top:483.88px;font-size:9px;color:#2f5fb3;font-weight:normal;text-decoration:underline;text-decoration-color:#2f5fb399;text-underline-offset:1px;">0,00</div>
<div class="t" style="left:8px;top:544.38px;font-size:9px;color:#4d4d4d;font-weight:normal;">Назначение</div>
<div class="t" style="left:8px;top:555.38px;font-size:9px;color:#4d4d4d;font-weight:normal;">платежа:</div>
<div class="t" style="left:8px;top:569.88px;font-size:9px;color:#2f5fb3;font-weight:normal;text-decoration:underline;text-decoration-color:#2f5fb399;text-underline-offset:1px;">Заполнить</div>
<div style="position:absolute;left:65px;top:544px;width:497px;height:58px;box-sizing:border-box;border:1px solid #c4c4c4;border-radius:2px;background:#fff"></div>
<div class="t" style="left:68px;top:546.88px;font-size:9px;color:#333;font-weight:normal;">Оплата по договору 16.02.2024</div>
<div class="t" style="left:68px;top:557.88px;font-size:9px;color:#333;font-weight:normal;">Сумма 250000-00</div>
<div class="t" style="left:68px;top:568.38px;font-size:9px;color:#333;font-weight:normal;">В т.ч. НДС(20%) 41666-67</div>
<div class="t" style="left:8px;top:615.88px;font-size:9px;color:#4d4d4d;font-weight:normal;">Исполнитель:</div>
<div style="position:absolute;left:68px;top:613px;width:265px;height:17px;box-sizing:border-box;border:1px solid #c0c0c0;border-radius:2px;background:#fff;"><div style="position:absolute;right:13px;top:0;width:13px;height:15px;box-sizing:border-box;border-left:1px solid #c0c0c0;"><svg width="12" height="15" style="position:absolute;left:0;top:0"><path d="M3 6h4.2l-2.1 2.2z" fill="#333"/></svg></div><div style="position:absolute;right:0px;top:0;width:13px;height:15px;box-sizing:border-box;border-left:1px solid #c0c0c0;"><svg width="12" height="15" style="position:absolute;left:0;top:0" stroke="#555" stroke-width="1"><rect x="2.5" y="6.5" width="4" height="4" rx="0.4" fill="none"/><rect x="5.5" y="4.5" width="4" height="4" rx="0.4" fill="#fff"/></svg></div><div class="ft" style="left:2px;width:235px;height:15px;line-height:15px;color:#333333">Агличев В.В. (БИТ.ФИНАНС)</div></div>
<div class="t" style="left:340px;top:615.88px;font-size:9px;color:#4d4d4d;font-weight:normal;">Ответственный:</div>
<div style="position:absolute;left:408px;top:613px;width:265px;height:17px;box-sizing:border-box;border:1px solid #c0c0c0;border-radius:2px;background:#fff;"><div style="position:absolute;right:13px;top:0;width:13px;height:15px;box-sizing:border-box;border-left:1px solid #c0c0c0;"><svg width="12" height="15" style="position:absolute;left:0;top:0"><path d="M3 6h4.2l-2.1 2.2z" fill="#333"/></svg></div><div style="position:absolute;right:0px;top:0;width:13px;height:15px;box-sizing:border-box;border-left:1px solid #c0c0c0;"><svg width="12" height="15" style="position:absolute;left:0;top:0" stroke="#555" stroke-width="1"><rect x="2.5" y="6.5" width="4" height="4" rx="0.4" fill="none"/><rect x="5.5" y="4.5" width="4" height="4" rx="0.4" fill="#fff"/></svg></div><div class="ft" style="left:2px;width:235px;height:15px;line-height:15px;color:#333333">Агличев В.В. (БИТ.ФИНАНС)</div></div>
</body></html>
